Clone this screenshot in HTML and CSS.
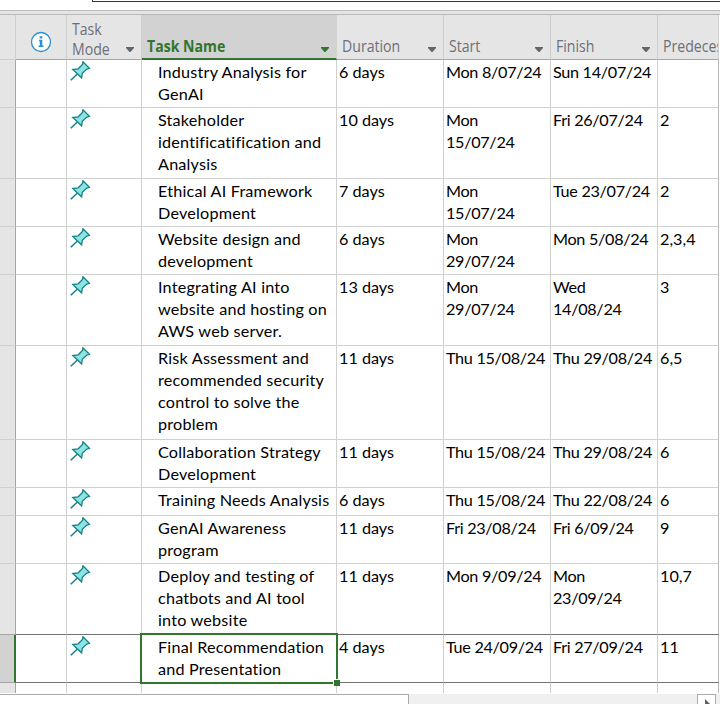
FILE: index.html
```html
<!DOCTYPE html>
<html lang="en">
<head>
<meta charset="utf-8">
<title>Project tasks</title>
<link rel="stylesheet" href="styles.css">
</head>
<body>
<svg class="defs" aria-hidden="true">
  <symbol id="pin" viewBox="0 0 20 20">
    <path d="M.7 18.8 7.2 12.7" fill="none" stroke="#168486" stroke-width="1.5"/>
    <path d="M12.6.8 19 7.2 16.4 7.8 12 12 11.3 16.4 2.7 8.3 8 7.6 12.2 3.3Z" fill="#8ee4e3" stroke="#168486" stroke-width="1.3"/>
  </symbol>
  <symbol id="arrow" viewBox="0 0 8 5"><path d="M0 0H8V1L4.5 5H3.5L0 1Z" fill="currentColor"/></symbol>
</svg>
<div class="window">
  <div class="entry"><div class="entry-box"></div></div>
  <div class="strip"></div>
  <div class="sheet">
    <div class="row head">
      <div class="cell"></div>
      <div class="cell info"><svg width="22" height="22" viewBox="0 0 22 22"><circle cx="11" cy="11" r="9.5" fill="#fff" stroke="#2b90d0" stroke-width="1.3"/><path d="M9.7 5.2h2.6v2.3H9.7zM9 8.8h3.3v5.8h1.2V16H8.6v-1.4h1.2v-4.4H9z" fill="#2b90d0"/></svg></div>
      <div class="cell"><span class="wrapped">Task<br>Mode</span><svg class="arrow"><use href="#arrow"/></svg></div>
      <div class="cell active"><b>Task Name</b><svg class="arrow"><use href="#arrow"/></svg></div>
      <div class="cell"><span>Duration</span><svg class="arrow"><use href="#arrow"/></svg></div>
      <div class="cell"><span>Start</span><svg class="arrow"><use href="#arrow"/></svg></div>
      <div class="cell"><span>Finish</span><svg class="arrow"><use href="#arrow"/></svg></div>
      <div class="cell"><span>Predecessors</span></div>
    </div>
    <div class="row two"><div class="cell"></div><div class="cell"></div><div class="cell"><svg class="pin"><use href="#pin"/></svg></div><div class="cell name">Industry Analysis for<br>GenAI</div><div class="cell">6 days</div><div class="cell date">Mon 8/07/24</div><div class="cell date">Sun 14/07/24</div><div class="cell"></div></div>
    <div class="row three"><div class="cell"></div><div class="cell"></div><div class="cell"><svg class="pin"><use href="#pin"/></svg></div><div class="cell name">Stakeholder<br>identificatification and<br>Analysis</div><div class="cell">10 days</div><div class="cell date">Mon<br>15/07/24</div><div class="cell date">Fri 26/07/24</div><div class="cell">2</div></div>
    <div class="row two"><div class="cell"></div><div class="cell"></div><div class="cell"><svg class="pin"><use href="#pin"/></svg></div><div class="cell name">Ethical AI Framework<br>Development</div><div class="cell">7 days</div><div class="cell date">Mon<br>15/07/24</div><div class="cell date">Tue 23/07/24</div><div class="cell">2</div></div>
    <div class="row two"><div class="cell"></div><div class="cell"></div><div class="cell"><svg class="pin"><use href="#pin"/></svg></div><div class="cell name">Website design and<br>development</div><div class="cell">6 days</div><div class="cell date">Mon<br>29/07/24</div><div class="cell date">Mon 5/08/24</div><div class="cell">2,3,4</div></div>
    <div class="row three"><div class="cell"></div><div class="cell"></div><div class="cell"><svg class="pin"><use href="#pin"/></svg></div><div class="cell name">Integrating AI into<br>website and hosting on<br>AWS web server.</div><div class="cell">13 days</div><div class="cell date">Mon<br>29/07/24</div><div class="cell date">Wed<br>14/08/24</div><div class="cell">3</div></div>
    <div class="row four"><div class="cell"></div><div class="cell"></div><div class="cell"><svg class="pin"><use href="#pin"/></svg></div><div class="cell name">Risk Assessment and<br>recommended security<br>control to solve the<br>problem</div><div class="cell">11 days</div><div class="cell date">Thu 15/08/24</div><div class="cell date">Thu 29/08/24</div><div class="cell">6,5</div></div>
    <div class="row two"><div class="cell"></div><div class="cell"></div><div class="cell"><svg class="pin"><use href="#pin"/></svg></div><div class="cell name">Collaboration Strategy<br>Development</div><div class="cell">11 days</div><div class="cell date">Thu 15/08/24</div><div class="cell date">Thu 29/08/24</div><div class="cell">6</div></div>
    <div class="row one"><div class="cell"></div><div class="cell"></div><div class="cell"><svg class="pin"><use href="#pin"/></svg></div><div class="cell name">Training Needs Analysis</div><div class="cell">6 days</div><div class="cell date">Thu 15/08/24</div><div class="cell date">Thu 22/08/24</div><div class="cell">6</div></div>
    <div class="row two"><div class="cell"></div><div class="cell"></div><div class="cell"><svg class="pin"><use href="#pin"/></svg></div><div class="cell name">GenAI Awareness<br>program</div><div class="cell">11 days</div><div class="cell date">Fri 23/08/24</div><div class="cell date">Fri 6/09/24</div><div class="cell">9</div></div>
    <div class="row three before-selected"><div class="cell"></div><div class="cell"></div><div class="cell"><svg class="pin"><use href="#pin"/></svg></div><div class="cell name">Deploy and testing of<br>chatbots and AI tool<br>into website</div><div class="cell">11 days</div><div class="cell date">Mon 9/09/24</div><div class="cell date">Mon<br>23/09/24</div><div class="cell">10,7</div></div>
    <div class="row two selected"><div class="cell"></div><div class="cell"></div><div class="cell"><svg class="pin"><use href="#pin"/></svg></div><div class="cell name">Final Recommendation<br>and Presentation<i class="outline"></i></div><div class="cell">4 days</div><div class="cell date">Tue 24/09/24</div><div class="cell date">Fri 27/09/24</div><div class="cell">11</div></div>
    <div class="row tail"><div class="cell"></div><div class="cell"></div><div class="cell"></div><div class="cell"></div><div class="cell"></div><div class="cell"></div><div class="cell"></div><div class="cell"></div></div>
  </div>
  <div class="scroll"><div class="thumb"></div><div class="scroll-button"><svg width="6" height="12" viewBox="0 0 6 12"><path d="M0 0 6 6 0 12Z" fill="#606060"/></svg></div></div>
</div>
</body>
</html>
```
FILE: styles.css
```css
* { box-sizing: border-box; }
body { margin: 0; background: #fff; overflow: hidden; }
.defs { position: absolute; width: 0; height: 0; }
.window { width: 720px; height: 704px; overflow: hidden; display: flex; flex-direction: column; }
.entry { height: 10px; padding-left: 92px; flex: none; }
.entry-box { height: 2px; border-left: 1px solid #333; border-bottom: 1px solid #333; }
.strip { height: 5px; flex: none; background: #e5e5e5; border-top: 1px solid #bcbcbc; border-bottom: 1px solid #b8b8b8; }
.sheet { width: 719px; flex: none; font: 16.2px/22px Lato, "Liberation Sans", sans-serif; color: #000; }
.row { display: grid; grid-template-columns: 16px 51px 75px 195px 107px 107px 107px 61px; }
.one { height: 28px; }
.two { height: 48px; }
.three { height: 71px; }
.four { height: 94px; }
.cell { border-right: 1px solid #d0d0d0; border-bottom: 1px solid #d0d0d0; padding: 1px 0 0 2px; white-space: nowrap; min-width: 0; position: relative; }
.cell:first-child { background: #e5e5e5; border-right-color: #a6a6a6; }
.cell:last-child { border-right-color: #b8b8b8; }
.cell.name { padding-left: 16px; letter-spacing: .2px; }
.cell.date { letter-spacing: -.3px; }
.pin { display: block; width: 20.5px; height: 20.5px; margin-left: 1px; margin-top: .3px; }
.head { height: 45px; font: 15.5px/20px "Open Sans", "Noto Sans", sans-serif; color: #6c7078; }
.head .cell { display: flex; align-items: flex-end; justify-content: space-between; padding: 0 7px 2px 5px; background: #e5e5e5; border-right-color: #cecece; border-bottom-color: #a6a6a6; overflow: hidden; }
.head .cell:first-child { border-bottom-color: #cecece; }
.head .cell.info { justify-content: center; padding: 0 0 6px; }
.head .cell.active { background: #d2d2d2; color: #31752f; border-right-color: #d2d2d2; border-bottom: 2px solid #31752f; padding-bottom: 1px; }
.head span, .head b { transform: scaleX(.91); transform-origin: left; margin-bottom: 1px; }
.head .wrapped { margin-bottom: -2px; }
.arrow { width: 8px; height: 5px; flex: none; margin-bottom: 5px; color: #62666c; }
.active .arrow { color: #31752f; }
.before-selected .cell { border-bottom-color: #737373; }
.selected .cell { border-bottom-color: #737373; }
.before-selected .cell:first-child, .selected .cell:first-child { border-bottom-color: #a6a6a6; }
.selected .cell:first-child { background: #d2d2d2; border-right: 2px solid #31752f; }
.outline { position: absolute; inset: -2px -2px -2px -2px; border: 2px solid #31752f; z-index: 1; }
.outline::after { content: ""; position: absolute; right: -4px; bottom: -4px; width: 6px; height: 6px; background: #31752f; border-left: 1px solid #fff; border-top: 1px solid #fff; }
.tail { height: 10px; }
.tail .cell { border-bottom: 0; }
.scroll { display: flex; justify-content: space-between; height: 10px; margin-top: 1px; background: #f0f0f0; flex: none; }
.thumb { width: 409px; background: #fff; border-top: 1px solid #ababab; border-right: 1px solid #ababab; }
.scroll-button { width: 19px; height: 20px; margin-right: 4px; background: #fff; border: 1px solid #ababab; padding: 4px 0 0 7px; }
.scroll-button svg { display: block; }
```
